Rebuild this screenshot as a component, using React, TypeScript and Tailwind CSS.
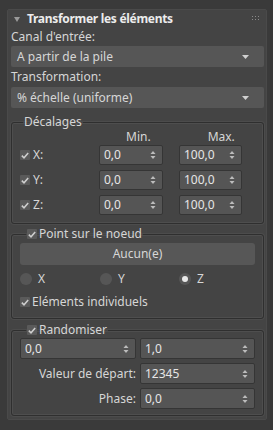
import React from "react";

const font = { fontFamily: '"Noto Sans", "Open Sans", sans-serif' };

function Spinner() {
  return (
    <svg width="6" height="10" viewBox="0 0 6 10" className="shrink-0">
      <path d="M3 1 L5.5 4 L0.5 4 Z" fill="#bdbdbd" />
      <path d="M3 9 L5.5 6 L0.5 6 Z" fill="#bdbdbd" />
    </svg>
  );
}

function Caret() {
  return (
    <svg width="7" height="6" viewBox="0 0 7 6" className="shrink-0">
      <path d="M0 1 L7 1 L3.5 5 Z" fill="#d0d0d0" />
    </svg>
  );
}

function Check() {
  return (
    <span className="flex h-[10px] w-[10px] shrink-0 items-center justify-center rounded-[1px] bg-[#5a5a5a]">
      <svg width="8" height="7" viewBox="0 0 8 7">
        <path d="M0.8 3.6 L3 5.8 L7.2 1" stroke="#cfcfcf" strokeWidth="1.5" fill="none" />
      </svg>
    </span>
  );
}

function Radio({ on }: { on?: boolean }) {
  return (
    <span className="flex h-[12px] w-[12px] shrink-0 items-center justify-center rounded-full bg-[#565656]">
      {on && <span className="h-[6px] w-[6px] rounded-full bg-[#e8e8e8]" />}
    </span>
  );
}

function Dropdown({ value }: { value: string }) {
  return (
    <div className="flex h-[21px] items-center justify-between rounded-[2px] bg-[#565656] pl-[6px] pr-[15px] text-[#d6d6d6]">
      <span>{value}</span>
      <Caret />
    </div>
  );
}

function Spin({ value, className }: { value: string; className: string }) {
  return (
    <div
      className={`flex items-center justify-between rounded-[2px] border border-[#353535] bg-[#555555] pl-[4px] pr-[6px] text-[#e6e6e6] ${className}`}
    >
      <span>{value}</span>
      <Spinner />
    </div>
  );
}

function Group({
  legend,
  className,
  legendClass,
  children,
}: {
  legend: React.ReactNode;
  className: string;
  legendClass: string;
  children: React.ReactNode;
}) {
  return (
    <fieldset
      className={`rounded-[3px] border border-[#2f2f2f] shadow-[inset_0_0_0_1px_#4e4e4e,0_0_0_1px_#4c4c4c] ${className}`}
    >
      <legend className={`flex items-center gap-[2px] px-[1px] leading-[14px] text-[#d6d6d6] ${legendClass}`}>
        {legend}
      </legend>
      {children}
    </fieldset>
  );
}

export default function App() {
  const rows = ["X", "Y", "Z"];
  return (
    <div
      className="h-[430px] w-[273px] bg-[#3a3a3a] pl-[7px] pr-[6px] pt-[9px] text-[12px] leading-none"
      style={font}
    >
      <div className="h-[411px] rounded-[2px] border border-[#4a4a4a] bg-[#444444] pl-[3px] pr-[2px]">
        {/* title */}
        <div className="flex h-[18px] items-center">
          <svg width="6" height="5" viewBox="0 0 6 5" className="ml-[3px] mr-[7px]">
            <path d="M0 0 L6 0 L3 5 Z" fill="#9a9a9a" />
          </svg>
          <span className="text-[12px] font-bold tracking-[-0.3px] text-[#ececec]">Transformer les éléments</span>
          <svg width="7" height="6" viewBox="0 0 7 6" className="ml-auto mr-[5px]">
            {[0, 3, 6].map((x) =>
              [0, 3].map((y) => <rect key={`${x}${y}`} x={x} y={y} width="1" height="1" fill="#8a8a8a" />)
            )}
          </svg>
        </div>

        <div className="flex h-[18px] items-center text-[#d6d6d6]">Canal d'entrée:</div>
        <Dropdown value="A partir de la pile" />
        <div className="flex h-[20px] items-center text-[#d6d6d6]">Transformation:</div>
        <Dropdown value="% échelle (uniforme)" />

        {/* Décalages */}
        <Group legend="Décalages" legendClass="ml-[3px]" className="mt-[7px] pb-[8px] pl-[8px] pr-[20px]">
          <div className="flex h-[16px] items-center text-[#d6d6d6]">
            <span className="ml-[106px]">Min.</span>
            <span className="ml-[57px]">Max.</span>
          </div>
          <div className="flex flex-col gap-[5px]">
            {rows.map((r) => (
              <div key={r} className="flex h-[20px] items-center">
                <Check />
                <span className="ml-[3px] w-[66px] text-[#d6d6d6]">{r}:</span>
                <Spin value="0,0" className="h-[20px] w-[64px]" />
                <Spin value="100,0" className="ml-[16px] h-[20px] w-[63px]" />
              </div>
            ))}
          </div>
        </Group>

        {/* Point sur le noeud */}
        <Group
          legend={
            <>
              <Check />
              <span>Point sur le noeud</span>
            </>
          }
          legendClass="ml-[6px]"
          className="mt-[3px] pb-[9px] pl-[8px] pr-[8px]"
        >
          <div className="mt-[2px] flex h-[22px] items-center justify-center rounded-[3px] bg-[#575757] text-[#d6d6d6]">
            Aucun(e)
          </div>
          <div className="mt-[7px] flex h-[14px] items-center text-[#d6d6d6]">
            <div className="flex w-[80px] items-center gap-[6px]">
              <Radio />
              <span>X</span>
            </div>
            <div className="flex w-[79px] items-center gap-[6px]">
              <Radio />
              <span>Y</span>
            </div>
            <div className="flex items-center gap-[6px]">
              <Radio on />
              <span>Z</span>
            </div>
          </div>
          <div className="mt-[9px] flex h-[14px] items-center gap-[2px] text-[#d6d6d6]">
            <Check />
            <span>Eléments individuels</span>
          </div>
        </Group>

        {/* Randomiser */}
        <Group
          legend={
            <>
              <Check />
              <span>Randomiser</span>
            </>
          }
          legendClass="ml-[6px]"
          className="mt-[4px] pb-[6px] pl-[8px] pr-[8px]"
        >
          <div className="mt-[1px] flex gap-[4px]">
            <Spin value="0,0" className="h-[21px] w-[116px]" />
            <Spin value="1,0" className="h-[21px] w-[115px]" />
          </div>
          <div className="mt-[4px] flex items-center gap-[4px]">
            <span className="w-[116px] text-right text-[#d6d6d6]">Valeur de départ:</span>
            <Spin value="12345" className="h-[21px] w-[115px]" />
          </div>
          <div className="mt-[4px] flex items-center gap-[4px]">
            <span className="w-[116px] text-right text-[#d6d6d6]">Phase:</span>
            <Spin value="0,0" className="h-[21px] w-[115px]" />
          </div>
        </Group>
      </div>
    </div>
  );
}
